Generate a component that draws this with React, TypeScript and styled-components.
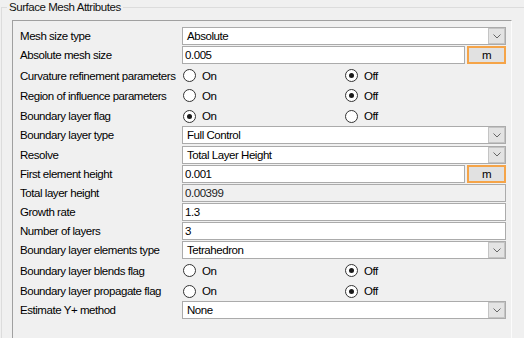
import styled, { createGlobalStyle } from "styled-components";

const GlobalStyle = createGlobalStyle`
    html, body {
        margin: 0;
        padding: 0;
        background: #f0f0f0;
        overflow: hidden;
    }
    body {
        font-family: "Liberation Sans", Arial, sans-serif;
        font-size: 11.5px;
        letter-spacing: -0.45px;
        color: #000;
    }
`;

const GroupBox = styled.fieldset`
    margin: 1px 0 0 1px;
    padding: 0;
    width: 523px;
    height: 337px;
    border: 1px solid #dcdcdc;
    border-right: none;
    border-bottom: none;
    box-sizing: border-box;
    legend {
        margin-left: 5px;
        padding: 0 2px;
        line-height: 13px;
        font-size: 11.5px;
        color: #111;
    }
`;

const Panel = styled.div`
    margin: 6px 0 0 10px;
    width: 500px;
    height: 318px;
    box-sizing: border-box;
    border-top: 1px solid #a0a0a0;
    border-left: 1px solid #a0a0a0;
    border-right: 1px solid #fcfcfc;
    padding: 6px 5px 0 7px;
`;

const Row = styled.div<{ $h: number; $radio?: boolean }>`
    display: grid;
    grid-template-columns: 162px 324px;
    height: ${p => p.$h}px;
    align-items: ${p => p.$radio ? 'center' : 'start'};
    .label {
        line-height: 18px;
        white-space: nowrap;
    }
`;

const Box = styled.div<{ $readonly?: boolean }>`
    display: flex;
    height: 18px;
    box-sizing: border-box;
    border: 1px solid #ababab;
    background: ${p => p.$readonly ? '#f0f0f0' : '#fff'};
    color: ${p => p.$readonly ? '#222' : '#000'};
    .value {
        flex: 1;
        line-height: 16px;
        padding-left: 2px;
    }
`;

const Combo = styled(Box)`
    .value {
        padding-left: 4px;
    }
    .arrow {
        width: 15px;
        margin: 1px;
        background: #e3e3e3;
        box-shadow: 0 0 0 1px #c4c4c4;
        display: flex;
        align-items: center;
        justify-content: center;
    }
`;

const WithUnit = styled.div`
    display: flex;
    gap: 2px;
    > div:first-child {
        flex: 1;
    }
`;

const UnitButton = styled.div`
    width: 39px;
    height: 18px;
    box-sizing: border-box;
    border: 2px solid #f5a448;
    background: #e1e1e1;
    text-align: center;
    line-height: 14px;
`;

const RadioPair = styled.div`
    display: grid;
    grid-template-columns: 162px 162px;
`;

const Radio = styled.div<{ $checked: boolean }>`
    display: flex;
    align-items: center;
    gap: 6px;
    padding-left: 1px;
    line-height: 14px;
    .dot {
        width: 13px;
        height: 13px;
        box-sizing: border-box;
        border-radius: 50%;
        border: 1px solid #333;
        background: #fff;
        display: flex;
        align-items: center;
        justify-content: center;
        &::after {
            content: "";
            width: 5px;
            height: 5px;
            border-radius: 50%;
            background: #1a1a1a;
            display: ${p => p.$checked ? 'block' : 'none'};
        }
    }
`;

const Chevron = () => (
    <svg width="8" height="5" viewBox="0 0 8 5">
        <path d="M0.5 0.5 L4 4 L7.5 0.5" fill="none" stroke="#666" strokeWidth="1" />
    </svg>
);

const INPUT_H = 19.2;
const RADIO_H = 20.33;

type Field =
    | { kind: 'combo'; label: string; value: string }
    | { kind: 'input'; label: string; value: string; unit?: boolean; readonly?: boolean }
    | { kind: 'radio'; label: string; on: boolean };

const fields: Field[] = [
    { kind: 'combo', label: 'Mesh size type', value: 'Absolute' },
    { kind: 'input', label: 'Absolute mesh size', value: '0.005', unit: true },
    { kind: 'radio', label: 'Curvature refinement parameters', on: false },
    { kind: 'radio', label: 'Region of influence parameters', on: false },
    { kind: 'radio', label: 'Boundary layer flag', on: true },
    { kind: 'combo', label: 'Boundary layer type', value: 'Full Control' },
    { kind: 'combo', label: 'Resolve', value: 'Total Layer Height' },
    { kind: 'input', label: 'First element height', value: '0.001', unit: true },
    { kind: 'input', label: 'Total layer height', value: '0.00399', readonly: true },
    { kind: 'input', label: 'Growth rate', value: '1.3' },
    { kind: 'input', label: 'Number of layers', value: '3' },
    { kind: 'combo', label: 'Boundary layer elements type', value: 'Tetrahedron' },
    { kind: 'radio', label: 'Boundary layer blends flag', on: false },
    { kind: 'radio', label: 'Boundary layer propagate flag', on: false },
    { kind: 'combo', label: 'Estimate Y+ method', value: 'None' },
];

const Control = ({ field }: { field: Field }) => {
    if (field.kind === 'combo') {
        return (
            <Combo>
                <div className="value">{field.value}</div>
                <div className="arrow"><Chevron /></div>
            </Combo>
        );
    }
    if (field.kind === 'radio') {
        return (
            <RadioPair>
                <Radio $checked={field.on}><span className="dot" />On</Radio>
                <Radio $checked={!field.on}><span className="dot" />Off</Radio>
            </RadioPair>
        );
    }
    const box = (
        <Box $readonly={field.readonly}>
            <div className="value">{field.value}</div>
        </Box>
    );
    if (field.unit) {
        return (
            <WithUnit>
                {box}
                <UnitButton>m</UnitButton>
            </WithUnit>
        );
    }
    return box;
};

const App = () => {
    return (
        <>
            <GlobalStyle />
            <GroupBox>
                <legend>Surface Mesh Attributes</legend>
                <Panel>
                    {fields.map(f => (
                        <Row key={f.label} $h={f.kind === 'radio' ? RADIO_H : INPUT_H} $radio={f.kind === 'radio'}>
                            <div className="label">{f.label}</div>
                            <Control field={f} />
                        </Row>
                    ))}
                </Panel>
            </GroupBox>
        </>
    );
}
export default App;
